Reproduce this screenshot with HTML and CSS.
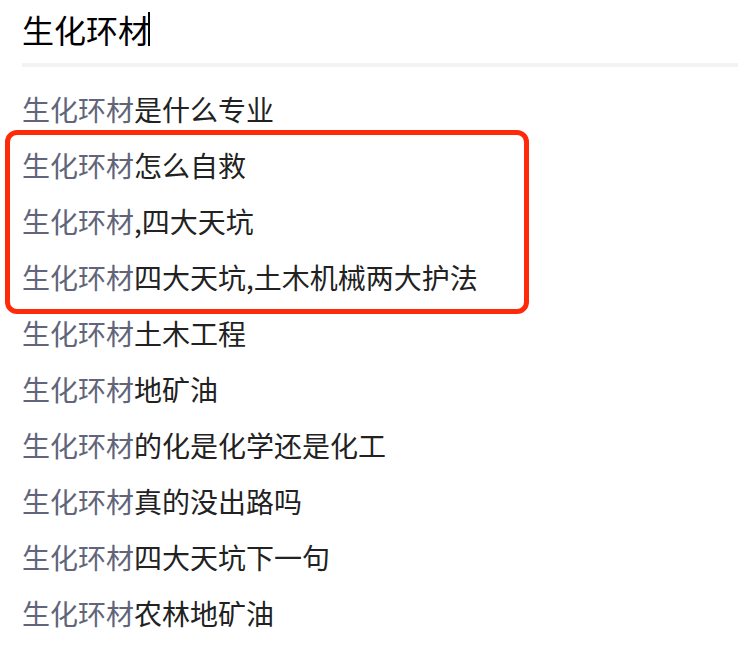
FILE: index.html
```html
<!DOCTYPE html>
<html lang="zh-CN">
<head>
    <meta charset="UTF-8">
    <meta name="viewport" content="width=device-width, initial-scale=1.0">
    <title>搜索建议</title>
    <link rel="stylesheet" href="styles.css">
</head>
<body>

    <div class="search-bar">
        <span class="query">生化环材</span><span class="caret"></span>
    </div>
    <div class="divider"></div>

    <ul class="suggestions">
        <li><span class="match">生化环材</span>是什么专业</li>
        <li class="highlight-group">
            <ul>
                <li><span class="match">生化环材</span>怎么自救</li>
                <li><span class="match">生化环材</span>,四大天坑</li>
                <li><span class="match">生化环材</span>四大天坑,土木机械两大护法</li>
            </ul>
        </li>
        <li><span class="match">生化环材</span>土木工程</li>
        <li><span class="match">生化环材</span>地矿油</li>
        <li><span class="match">生化环材</span>的化是化学还是化工</li>
        <li><span class="match">生化环材</span>真的没出路吗</li>
        <li><span class="match">生化环材</span>四大天坑下一句</li>
        <li><span class="match">生化环材</span>农林地矿油</li>
    </ul>

</body>
</html>
```

FILE: styles.css
```css
:root {
    --text-color: #222222;
    --match-color: #61657a;
    --divider-color: #f3f3f3;
    --mark-color: #ff2a0a;
}

body {
    font-family: "Noto Sans CJK SC", "Noto Sans", sans-serif;
    background: #ffffff;
    color: var(--text-color);
    margin: 0;
    padding: 0 0 0 22px;
}

.search-bar {
    display: flex;
    align-items: center;
    height: 58px;
    font-size: 32px;
    color: #000000;
}

.caret {
    width: 2px;
    height: 34px;
    margin-left: -2px;
    background: #000000;
}

.divider {
    height: 4px;
    margin-top: 5px;
    background: var(--divider-color);
}

.suggestions,
.suggestions ul {
    list-style: none;
    margin: 0;
    padding: 0;
}

.suggestions {
    margin-top: 14px;
}

.suggestions li {
    font-size: 28px;
    line-height: 56px;
    white-space: nowrap;
}

.match {
    color: var(--match-color);
}

/* red annotation box around rows 2-4 */
.suggestions .highlight-group {
    box-sizing: border-box;
    width: 524px;
    margin: -7px 0 -9px -17px;
    padding: 2px 0 4px 12px;
    border: 5px solid var(--mark-color);
    border-radius: 12px;
    line-height: normal;
}
```
